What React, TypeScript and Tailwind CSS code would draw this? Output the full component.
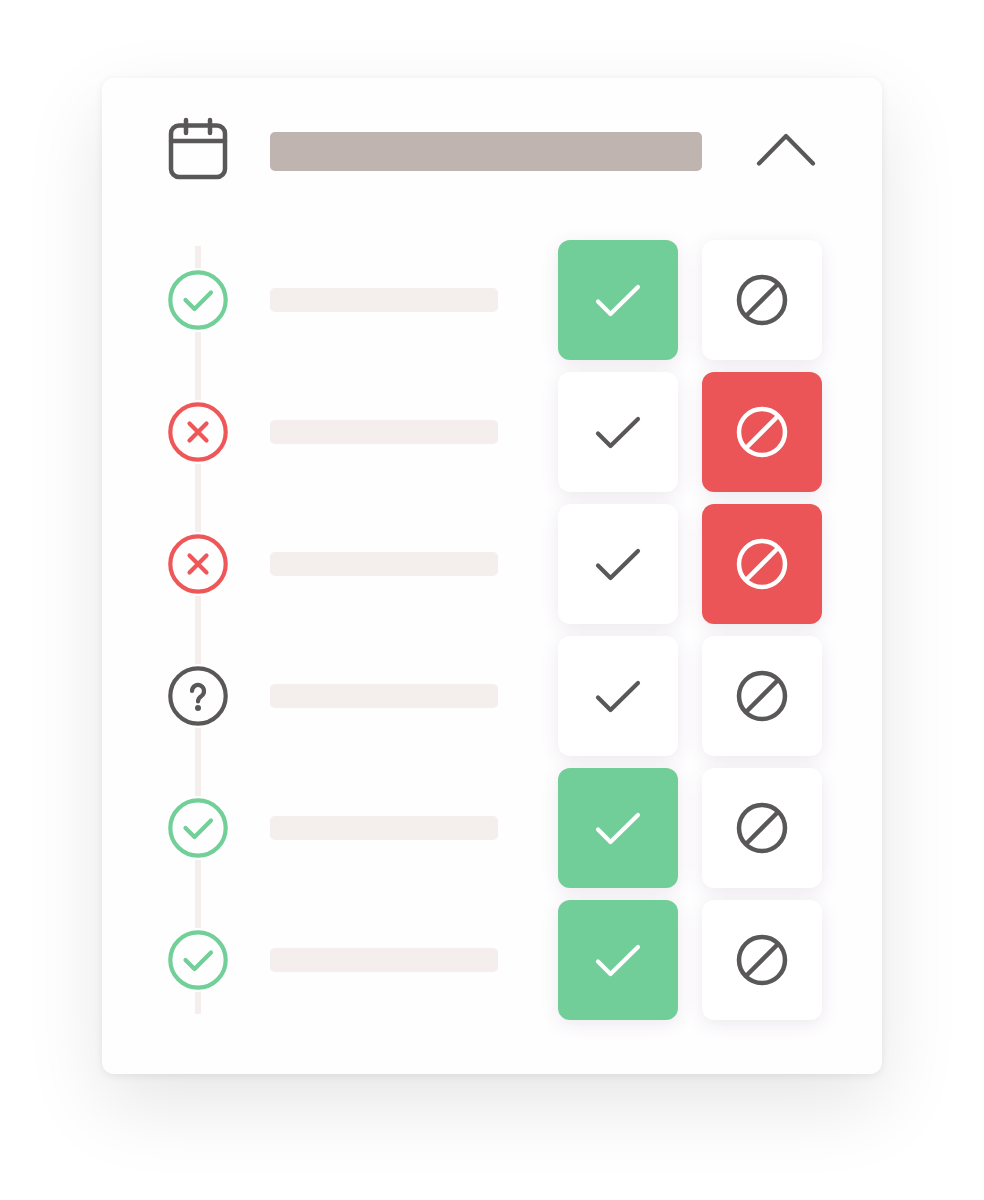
const rows: { status: "ok" | "no" | "unknown"; yes: boolean; block: boolean }[] = [
  { status: "ok", yes: true, block: false },
  { status: "no", yes: false, block: true },
  { status: "no", yes: false, block: true },
  { status: "unknown", yes: false, block: false },
  { status: "ok", yes: true, block: false },
  { status: "ok", yes: true, block: false },
];

const GREY = "#5a5759";
const GREEN = "#71cf98";
const RED = "#ef5658";

function Icon({ children }: { children: React.ReactNode }) {
  return (
    <svg width="72" height="72" viewBox="0 0 72 72" fill="none" strokeLinecap="round" strokeLinejoin="round" className="block shrink-0">
      {children}
    </svg>
  );
}

function Status({ status }: { status: "ok" | "no" | "unknown" }) {
  const color = status === "ok" ? GREEN : status === "no" ? RED : GREY;
  return (
    <Icon>
      <circle cx="36" cy="36" r="32" fill="#fffeff" />
      <circle cx="36" cy="36" r="27.7" stroke={color} strokeWidth="4.2" fill="#fffeff" />
      {status === "ok" && <path d="M23.5 36L32.5 45L49 28.5" stroke={color} strokeWidth="4.2" />}
      {status === "no" && <path d="M27.5 27.5L44.5 44.5M44.5 27.5L27.5 44.5" stroke={color} strokeWidth="4.2" />}
      {status === "unknown" && (
        <>
          <path d="M30 31a6 6 0 1 1 9.5 4.9c-2.2 1.5-3.5 2.8-3.5 5.6" stroke={color} strokeWidth="4.2" />
          <circle cx="36" cy="48" r="3" fill={color} />
        </>
      )}
    </Icon>
  );
}

function Check({ color }: { color: string }) {
  return (
    <Icon>
      <path d="M16 37.5L28.5 50L56 23" stroke={color} strokeWidth="4.2" />
    </Icon>
  );
}

function Block({ color }: { color: string }) {
  return (
    <Icon>
      <circle cx="36" cy="36" r="23" stroke={color} strokeWidth="4.5" />
      <path d="M20 52L52 20" stroke={color} strokeWidth="4.5" strokeLinecap="butt" />
    </Icon>
  );
}

export default function App() {
  return (
    <div className="min-h-[1200px] bg-white pl-[102px] pt-[78px]">
      <div className="h-[996px] w-[780px] rounded-[12px] bg-[#fffeff] px-[60px] pb-[54px] pt-[36px] shadow-[0_30px_80px_rgba(0,0,0,0.10),0_2px_8px_rgba(0,0,0,0.07)]">
        <div className="flex h-[72px] items-center">
          <Icon>
            <rect x="9" y="11.5" width="54" height="51.5" rx="8" stroke={GREY} strokeWidth="4.5" />
            <path d="M9 27H63M24 6V19M48 6V19" stroke={GREY} strokeWidth="4.5" />
          </Icon>
          <div className="ml-[36px] mt-[2px] h-[39px] w-[432px] rounded-[5px] bg-[#bfb4b0]" />
          <div className="ml-[48px]">
            <Icon>
              <path d="M9 49.5L36 22L63 49.5" stroke={GREY} strokeWidth="4.2" />
            </Icon>
          </div>
        </div>

        <div className="relative mt-[54px] flex flex-col gap-[12px]">
          <div className="absolute bottom-[6px] left-[33px] top-[6px] w-[6px] bg-[#f4eeec]" />
          {rows.map((r, i) => (
            <div key={i} className="relative flex h-[120px] items-center">
              <Status status={r.status} />
              <div className="ml-[36px] h-[24px] w-[228px] rounded-[5px] bg-[#f4eeec]" />
              <div
                className={`ml-[60px] flex h-[120px] w-[120px] items-center justify-center rounded-[12px] shadow-[0_4px_18px_rgba(60,40,70,0.10)] ${
                  r.yes ? "bg-[#72ce98]" : "bg-white"
                }`}
              >
                <Check color={r.yes ? "#ffffff" : GREY} />
              </div>
              <div
                className={`ml-[24px] flex h-[120px] w-[120px] items-center justify-center rounded-[12px] shadow-[0_4px_18px_rgba(60,40,70,0.10)] ${
                  r.block ? "bg-[#ec5557]" : "bg-white"
                }`}
              >
                <Block color={r.block ? "#ffffff" : GREY} />
              </div>
            </div>
          ))}
        </div>
      </div>
    </div>
  );
}
